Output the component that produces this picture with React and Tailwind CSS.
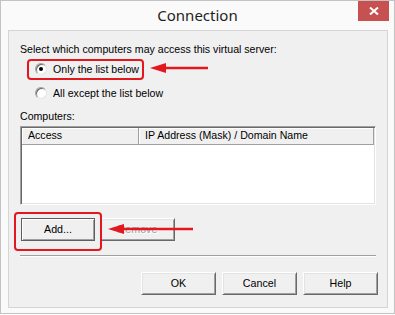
import React from 'react';

const font = { fontFamily: '"Liberation Sans", Arial, sans-serif' };

const Btn = ({ children, w = 'w-[75px]', disabled, isDefault }) => (
  <div
    className={`${w} h-[23px] flex items-center justify-center bg-[#f0f0f0] text-[10.7px] ${
      isDefault
        ? 'border border-[#5f5f5f] shadow-[inset_1px_1px_#ffffff,inset_-1px_-1px_#a0a0a0]'
        : 'border border-t-white border-l-white border-r-[#696969] border-b-[#696969] shadow-[inset_1px_1px_#e3e3e3,inset_-1px_-1px_#a0a0a0]'
    } ${disabled ? 'text-[#a0a0a0] [text-shadow:1px_1px_#ffffff]' : 'text-black'}`}
  >
    {children}
  </div>
);

const Radio = ({ checked, label }) => (
  <div className="h-[14px] flex items-center ml-[15px] gap-[6px]">
    <div className="w-[12px] h-[12px] rounded-full bg-white border border-t-[#a0a0a0] border-l-[#a0a0a0] border-r-[#e3e3e3] border-b-[#e3e3e3] flex items-center justify-center shadow-[inset_1px_1px_#696969]">
      {checked && <div className="w-[4px] h-[4px] rounded-full bg-black" />}
    </div>
    <span className="leading-[13px]">{label}</span>
  </div>
);

const Arrow = ({ len }) => (
  <svg width={len} height="12" viewBox={`0 0 ${len} 12`}>
    <line x1="10" y1="6" x2={len} y2="6" stroke="#e3171e" strokeWidth="2.5" />
    <polygon points="0,6 16,1 16,11" fill="#e3171e" />
  </svg>
);

export default function App() {
  return (
    <div className="w-[395px] h-[315px] bg-white" style={font}>
      <div className="w-[395px] h-[314px] border border-[#c3c3c3] bg-[#fafafa] flex flex-col">
        <div className="h-[29px] grid grid-cols-[1fr_auto_1fr]">
          <div />
          <div
            className="self-center text-[15px] text-[#1e1e1e]"
            style={{ fontFamily: '"Noto Sans", "Open Sans", sans-serif' }}
          >
            Connection
          </div>
          <div className="justify-self-end self-start mr-[5px] w-[31px] h-[20px] bg-[#c75050] flex items-center justify-center">
            <svg width="10" height="8" viewBox="0 0 10 8">
              <path d="M1 0.5 L9 7.5 M9 0.5 L1 7.5" stroke="#ffffff" strokeWidth="2" />
            </svg>
          </div>
        </div>

        <div className="relative ml-[7px] mr-[6px] h-[278px] border border-[#d5d5d5] bg-[#f0f0f0] flex flex-col pl-[11px] pr-[11px] text-[10.6px] text-black">
          <div className="mt-[12px] h-[13px] leading-[13px]">
            Select which computers may access this virtual server:
          </div>
          <div className="mt-[6px]">
            <Radio checked label="Only the list below" />
          </div>
          <div className="mt-[10px]">
            <Radio label="All except the list below" />
          </div>
          <div className="mt-[10px] h-[13px] leading-[13px]">Computers:</div>

          <div className="mt-[3px] h-[79px] w-[356px] bg-white border border-t-[#a0a0a0] border-l-[#a0a0a0] border-r-white border-b-white shadow-[inset_1px_1px_#696969,inset_-1px_-1px_#e3e3e3] p-[1px]">
            <div className="h-[17px] flex">
              <div className="w-[117px] h-full bg-[#f0f0f0] border-r border-b border-[#a0a0a0] shadow-[inset_1px_1px_#ffffff] pl-[6px] flex items-center">
                Access
              </div>
              <div className="flex-1 h-full bg-[#f0f0f0] border-r border-b border-[#a0a0a0] shadow-[inset_1px_1px_#ffffff] pl-[6px] flex items-center">
                IP Address (Mask) / Domain Name
              </div>
            </div>
          </div>

          <div className="mt-[13px] flex gap-[5px] ml-[1px]">
            <Btn isDefault w="w-[74px]">Add...</Btn>
            <Btn disabled>Remove</Btn>
          </div>

          <div className="mt-[14px] w-[356px] h-[2px] border-t border-[#a0a0a0] border-b border-b-white" />

          <div className="mt-[15px] flex justify-end gap-[6px] -mr-[2px]">
            <Btn>OK</Btn>
            <Btn>Cancel</Btn>
            <Btn>Help</Btn>
          </div>

          <div className="absolute left-[18px] top-[28px] w-[117px] h-[21px] border-2 border-[#e3171e] rounded-[4px]" />
          <div className="absolute left-[141px] top-[31px]">
            <Arrow len={58} />
          </div>
          <div className="absolute left-[5px] top-[181px] w-[88px] h-[39px] border-2 border-[#e3171e] rounded-[4px]" />
          <div className="absolute left-[99px] top-[192px]">
            <Arrow len={85} />
          </div>
        </div>
      </div>
    </div>
  );
}
